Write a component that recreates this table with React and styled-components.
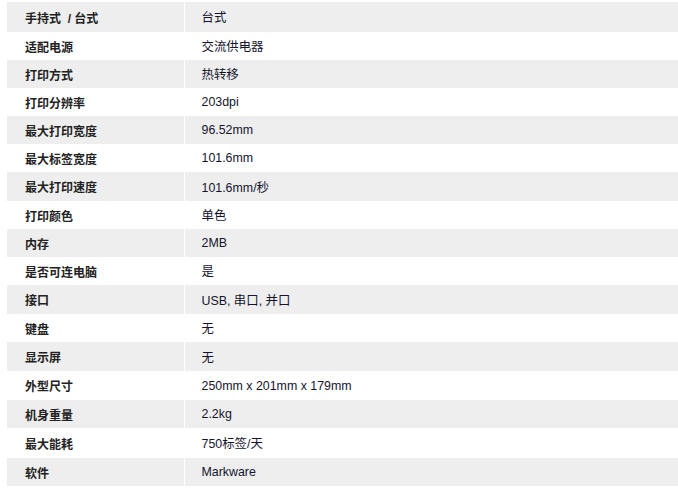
import React from 'react';
import styled, { createGlobalStyle } from 'styled-components';

const GlobalStyle = createGlobalStyle`
    html, body {
        margin: 0;
        padding: 0;
        background: #FFFFFF;
    }
`;

const specList = [
    { label: '手持式  / 台式', value: '台式', h: 30 },
    { label: '适配电源', value: '交流供电器', h: 28 },
    { label: '打印方式', value: '热转移', h: 28 },
    { label: '打印分辨率', value: '203dpi', h: 28 },
    { label: '最大打印宽度', value: '96.52mm', h: 28 },
    { label: '最大标签宽度', value: '101.6mm', h: 28 },
    { label: '最大打印速度', value: '101.6mm/秒', h: 29 },
    { label: '打印颜色', value: '单色', h: 28 },
    { label: '内存', value: '2MB', h: 28 },
    { label: '是否可连电脑', value: '是', h: 28 },
    { label: '接口', value: 'USB, 串口, 并口', h: 29 },
    { label: '键盘', value: '无', h: 28 },
    { label: '显示屏', value: '无', h: 29 },
    { label: '外型尺寸', value: '250mm x 201mm x 179mm', h: 29 },
    { label: '机身重量', value: '2.2kg', h: 28 },
    { label: '最大能耗', value: '750标签/天', h: 30 },
    { label: '软件', value: 'Markware', h: 28 },
];

const SpecContainer = styled.div`
    padding: 2px 0 0 7px;
`;

const SpecTable = styled.table`
    width: 671px;
    border-collapse: collapse;
    table-layout: fixed;
    font-family: 'Liberation Sans', 'Noto Sans CJK SC', sans-serif;
    font-size: 12px;
    color: #111111;
`;

const SpecRow = styled.tr`
    height: ${(p) => p.$h}px;
    background: ${(p) => (p.$alt ? '#EEEEEE' : '#FFFFFF')};
`;

const LabelCell = styled.td`
    box-sizing: border-box;
    width: 177px;
    padding: 0 0 0 18px;
    border-right: 1px solid #FFFFFF;
    font-weight: 700;
    color: #222222;
    vertical-align: middle;
    white-space: pre;
`;

const ValueCell = styled.td`
    padding: 0 0 0 17px;
    vertical-align: middle;
    color: #14142e;
    font-size: 12.4px;
`;

const App = () => {
    return (
        <>
            <GlobalStyle />
            <SpecContainer>
                <SpecTable>
                    <tbody>
                        {specList.map((item, i) => (
                            <SpecRow key={item.label} $alt={i % 2 === 0} $h={item.h}>
                                <LabelCell>{item.label}</LabelCell>
                                <ValueCell>{item.value}</ValueCell>
                            </SpecRow>
                        ))}
                    </tbody>
                </SpecTable>
            </SpecContainer>
        </>
    );
};

export default App;
